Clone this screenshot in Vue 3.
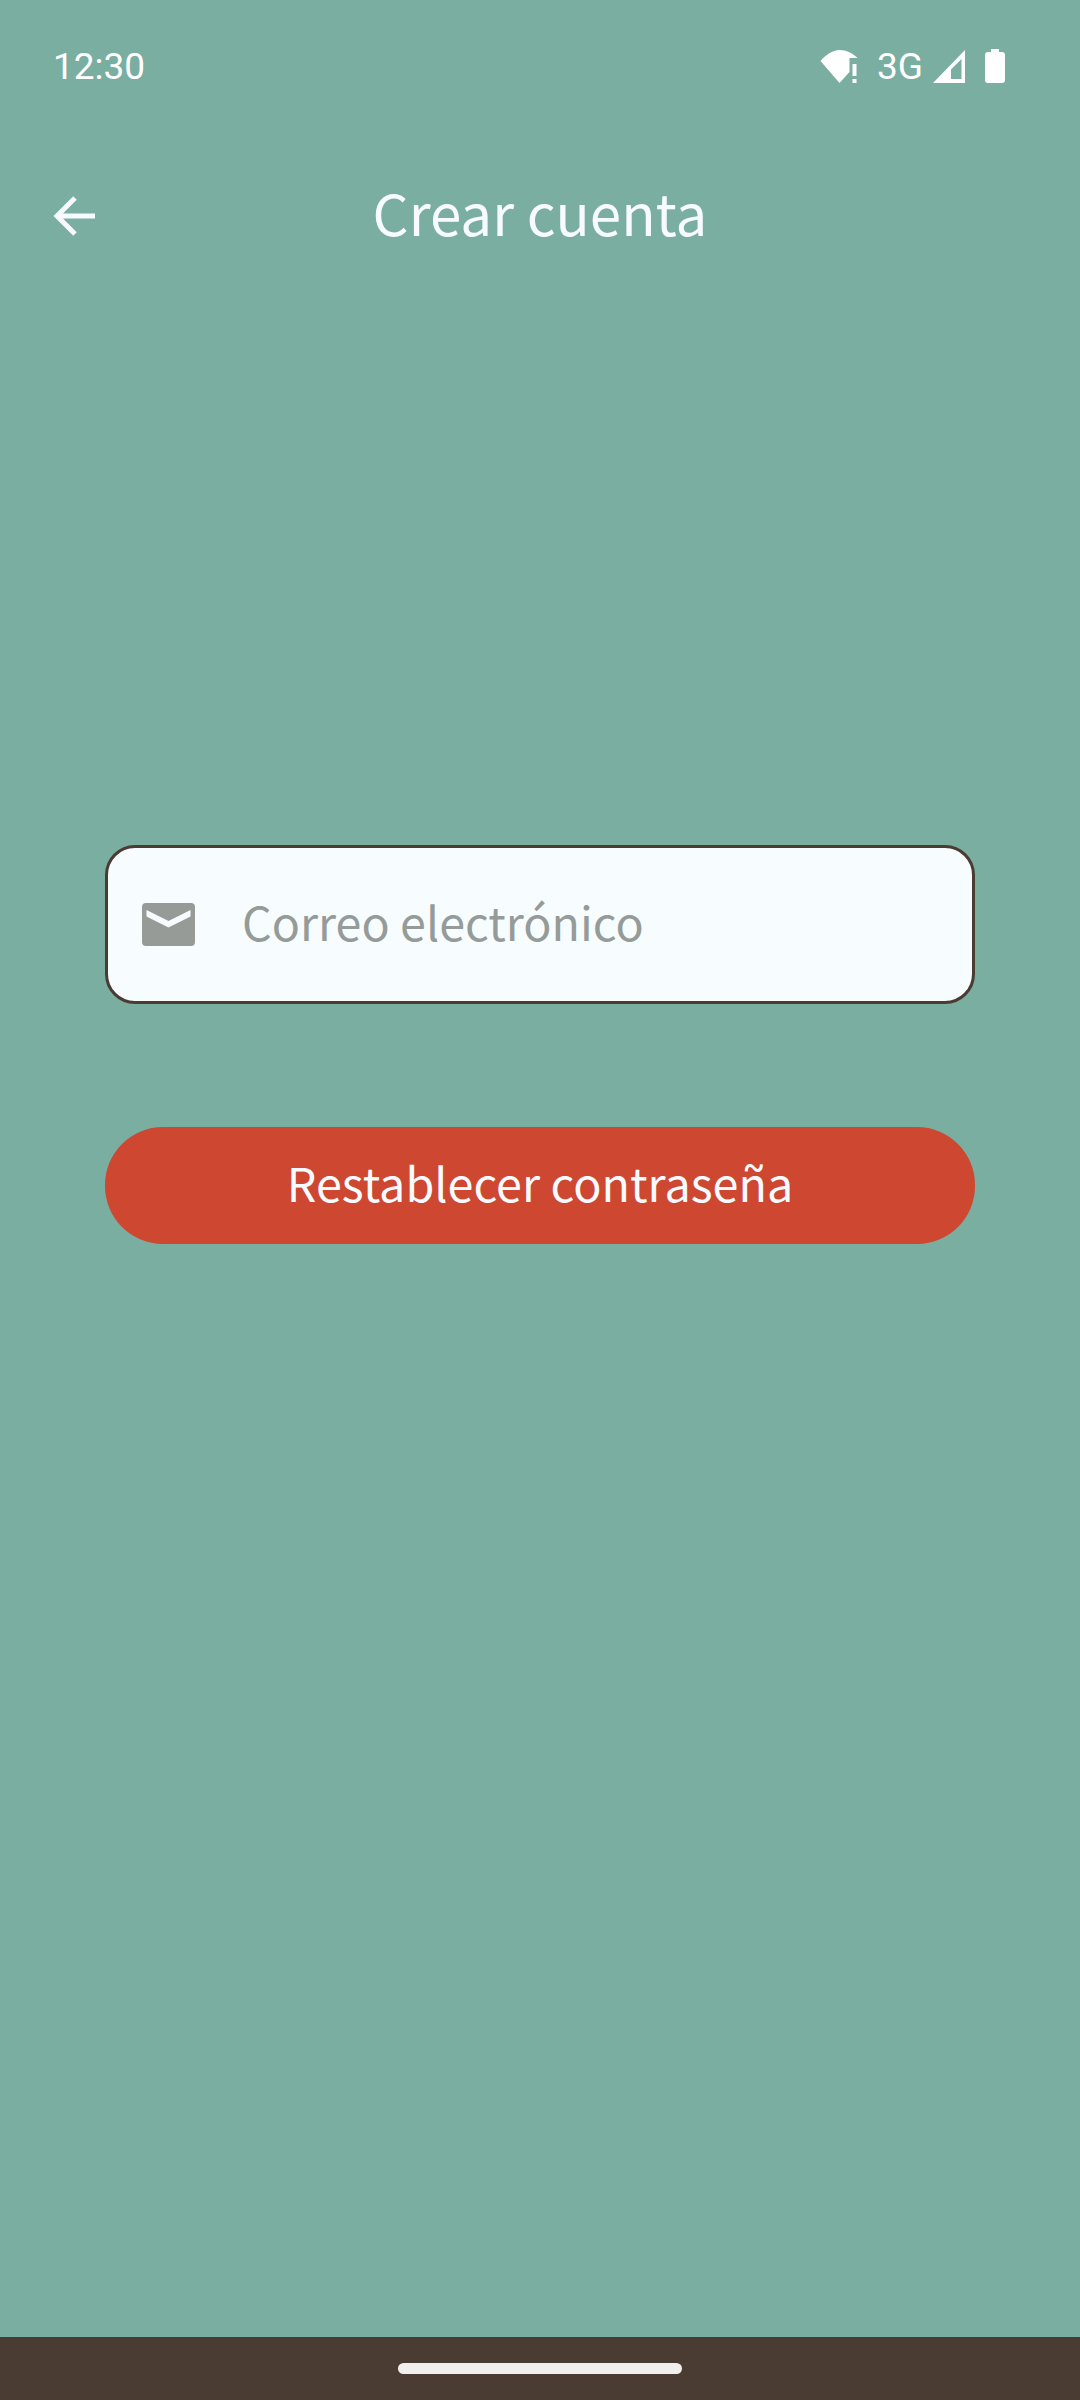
<template>
  <div class="page">
    <div class="status-bar">
      <span class="time">12:30</span>
      <div class="status-icons">
        <svg class="wifi" width="38" height="33" viewBox="0 0 37 33">
          <path d="M0 11 C5 5 12 0 19 0 C26 0 32 3 37 8 H29 V22 L19 33 Z" fill="#fff" />
          <rect x="32" y="14" width="4" height="12" fill="#fff" />
          <rect x="32" y="29" width="4" height="4" fill="#fff" />
        </svg>
        <span class="net">3G</span>
        <svg class="signal" width="32" height="33" viewBox="0 0 32 33">
          <path fill-rule="evenodd" d="M0 33 L32 0 V33 Z M18 29 H28.5 V9 L18 19.5 Z" fill="#fff" />
        </svg>
        <svg class="battery" width="20" height="34" viewBox="0 0 20 34">
          <path d="M6 0 H14 V3 H17 Q20 3 20 6 V31 Q20 34 17 34 H3 Q0 34 0 31 V6 Q0 3 3 3 H6 Z" fill="#fff" />
        </svg>
      </div>
    </div>

    <header class="toolbar">
      <button class="back">
        <svg width="42" height="42" viewBox="0 0 42 42">
          <path d="M42 21 H4 M22 3 L4 21 L22 39" fill="none" stroke="#f7fbff" stroke-width="5" />
        </svg>
      </button>
      <h1 class="title">Crear cuenta</h1>
    </header>

    <main class="content">
      <div class="field">
        <svg class="mail" width="53" height="43" viewBox="0 0 53 43">
          <path fill-rule="evenodd" d="M4 0 H49 Q53 0 53 4 V39 Q53 43 49 43 H4 Q0 43 0 39 V4 Q0 0 4 0 Z M4.5 7 L26.5 18 L48.5 7 V13.5 L26.5 24.5 L4.5 13.5 Z" fill="#969b97" />
        </svg>
        <input class="email" type="text" placeholder="Correo electrónico" />
      </div>
      <button class="submit">Restablecer contraseña</button>
    </main>

    <footer class="nav-bar">
      <div class="handle"></div>
    </footer>
  </div>
</template>

<script setup>
</script>

<style>
body {
  margin: 0;
}
</style>

<style scoped>
.page {
  width: 1080px;
  height: 2400px;
  background: #7aaea0;
  display: flex;
  flex-direction: column;
  font-family: "Noto Sans CJK SC", "Noto Sans", sans-serif;
}

.status-bar {
  height: 68px;
  padding: 32px 75px 0 53px;
  display: flex;
  align-items: center;
  justify-content: space-between;
  color: #fff;
}

.time {
  font-family: Roboto, sans-serif;
  font-size: 37px;
}

.status-icons {
  display: flex;
  align-items: center;
}

.net {
  font-family: Roboto, sans-serif;
  font-size: 37px;
  margin: 0 10px 0 19px;
}

.battery {
  margin-left: 20px;
}

.toolbar {
  height: 130px;
  margin-top: 46px;
  display: flex;
  align-items: center;
  justify-content: center;
  position: relative;
}

.back {
  position: absolute;
  left: 53px;
  top: 49px;
  padding: 0;
  border: none;
  background: none;
  display: flex;
}

.title {
  margin: 0;
  font-size: 56.5px;
  font-weight: 400;
  color: #f7fbff;
}

.content {
  flex: 1;
  padding: 569px 105px 0;
}

.field {
  height: 159px;
  box-sizing: border-box;
  border: 3px solid #4a3b33;
  border-radius: 30px;
  background: #f7fcff;
  display: flex;
  align-items: center;
  padding-left: 34px;
}

.email {
  margin-left: 47px;
  flex: 1;
  border: none;
  outline: none;
  background: none;
  font: inherit;
  font-size: 46.6px;
  padding: 0 0 8px;
}

.email::placeholder {
  color: #959b98;
  opacity: 1;
}

.submit {
  margin-top: 123px;
  width: 100%;
  height: 117px;
  border: none;
  border-radius: 58px;
  background: #cd4731;
  color: #f7fbff;
  font: inherit;
  font-size: 46.7px;
  padding: 0 0 8px;
}

.nav-bar {
  height: 63px;
  background: #4a3b33;
  display: flex;
  justify-content: center;
  padding-top: 26px;
  box-sizing: border-box;
}

.handle {
  width: 284px;
  height: 11px;
  border-radius: 6px;
  background: #f1f0ee;
}
</style>
